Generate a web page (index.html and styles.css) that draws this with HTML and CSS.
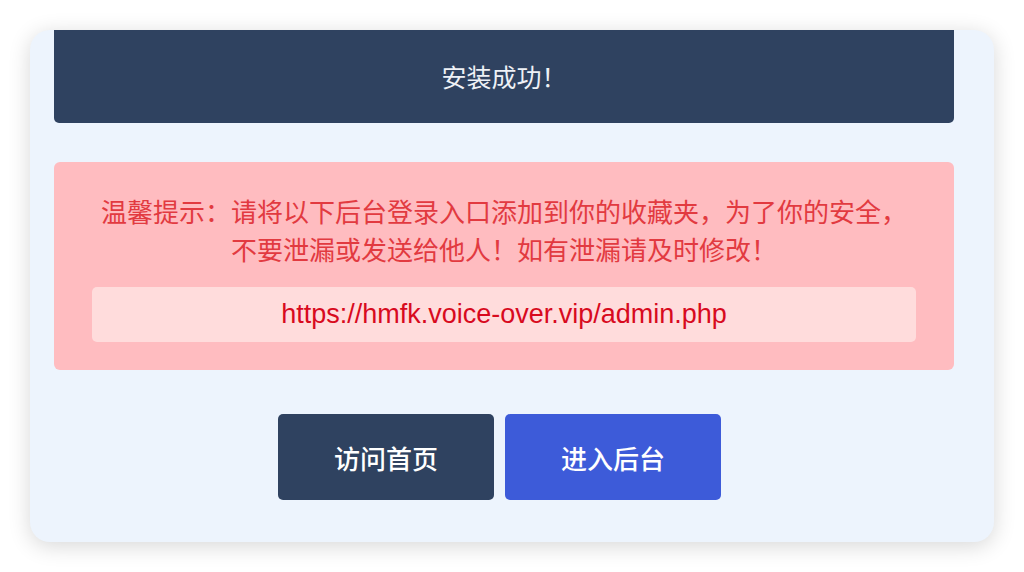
FILE: index.html
```html
<!DOCTYPE html>
<html lang="zh-CN">
<head>
<meta charset="utf-8">
<title>安装成功</title>
<link rel="stylesheet" href="styles.css">
</head>
<body>
<div class="card">
  <div class="header">安装成功！</div>
  <div class="alert">
    <p class="tip">温馨提示：请将以下后台登录入口添加到你的收藏夹，为了你的安全，<br>不要泄漏或发送给他人！如有泄漏请及时修改！</p>
    <div class="url">https://hmfk.voice-over.vip/admin.php</div>
  </div>
  <div class="actions">
    <a class="btn btn-dark" href="#">访问首页</a>
    <a class="btn btn-blue" href="#">进入后台</a>
  </div>
</div>
</body>
</html>
```

FILE: styles.css
```css
html, body {
  margin: 0;
  padding: 0;
  background: #ffffff;
}
body {
  padding: 30px;
  font-family: "Noto Sans CJK SC", "Liberation Sans", sans-serif;
}
.card {
  width: 964px;
  height: 512px;
  box-sizing: border-box;
  background: #edf4fd;
  border-radius: 20px;
  box-shadow: 0 4px 22px rgba(0, 0, 0, 0.16);
  padding: 0 40px 0 24px;
}
.header {
  height: 93px;
  background: #2f4260;
  color: #eef1f6;
  border-radius: 0 0 5px 5px;
  display: flex;
  align-items: center;
  justify-content: center;
  font-size: 25px;
  line-height: 1;
}
.alert {
  margin-top: 39px;
  background: #ffbcc0;
  border-radius: 6px;
  padding: 30px 38px 28px;
}
.tip {
  margin: 0;
  text-align: center;
  color: #e23a40;
  font-size: 26px;
  line-height: 38px;
}
.url {
  margin-top: 19px;
  height: 55px;
  background: #ffdcdc;
  border-radius: 5px;
  display: flex;
  align-items: center;
  justify-content: center;
  color: #d80a1e;
  font-family: "Liberation Sans", sans-serif;
  font-size: 27px;
}
.actions {
  margin-top: 44px;
  display: flex;
  justify-content: center;
  gap: 11px;
  padding-right: 9px;
}
.btn {
  width: 216px;
  height: 86px;
  border-radius: 5px;
  display: flex;
  align-items: center;
  justify-content: center;
  color: #ffffff;
  text-decoration: none;
  font-size: 26px;
  font-weight: 500;
}
.btn-dark {
  background: #2f4260;
}
.btn-blue {
  background: #3d5bd9;
}
```
